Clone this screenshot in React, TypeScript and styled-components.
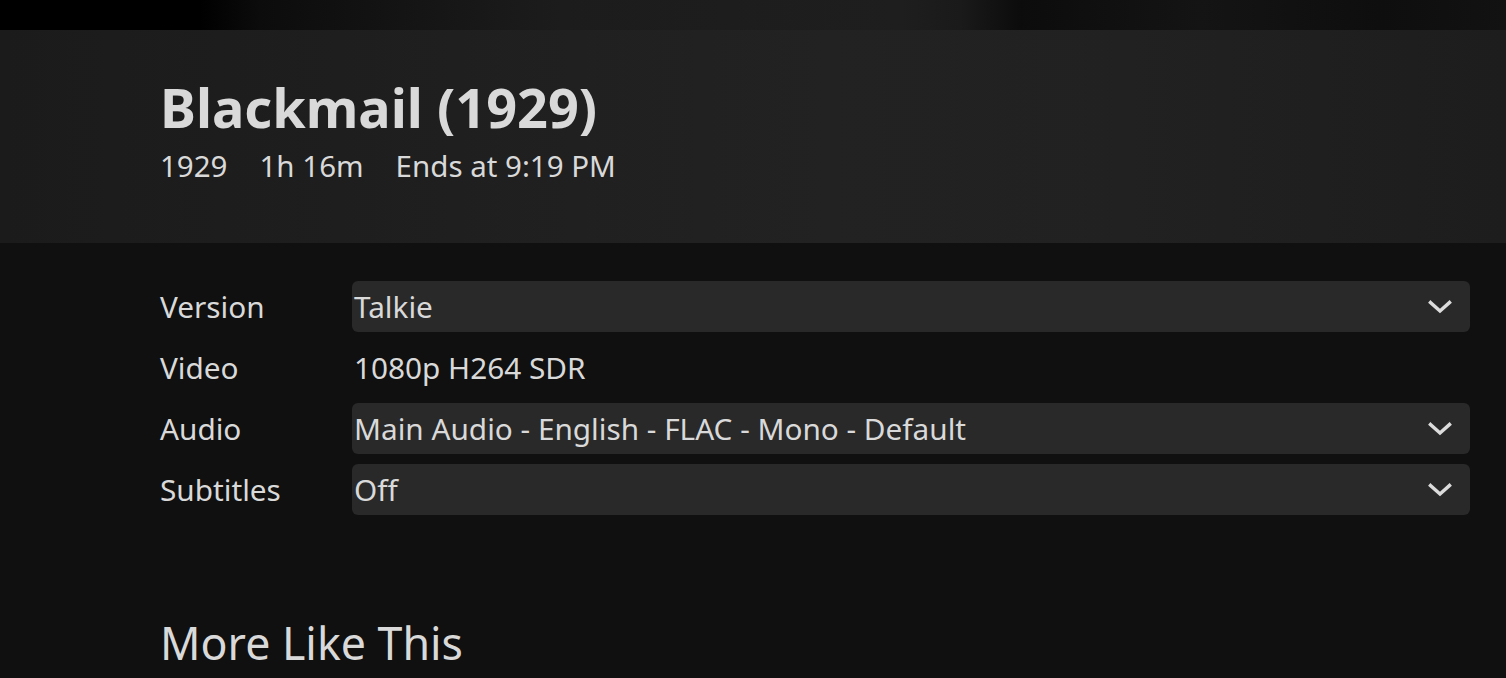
import React from "react";
import styled, { createGlobalStyle } from "styled-components";

const Global = createGlobalStyle`
  html, body {
    margin: 0;
    padding: 0;
    background: #101010;
    font-family: "Noto Sans", "Open Sans", sans-serif;
    color: #d9d9d9;
    overflow: hidden;
  }
`;

const Page = styled.div`
  width: 1506px;
  height: 678px;
  display: flex;
  flex-direction: column;
  background: #101010;
`;

const Backdrop = styled.div`
  height: 30px;
  flex: none;
  background: linear-gradient(
    90deg,
    #000 0px,
    #000 200px,
    #0c0c0c 260px,
    #151515 420px,
    #1c1c1c 560px,
    #1e1e1e 900px,
    #1a1a1a 960px,
    #0c0c0c 1020px,
    #141414 1200px,
    #0e0e0e 1380px,
    #121212 1506px
  );
`;

const Header = styled.header`
  height: 213px;
  flex: none;
  box-sizing: border-box;
  padding: 40px 0 0 160px;
  background: linear-gradient(
    90deg,
    #1b1b1b 0%,
    #1f1f1f 30%,
    #222 55%,
    #212121 75%,
    #1d1d1d 100%
  );
`;

const Title = styled.h1`
  margin: 0;
  font-size: 54px;
  font-weight: 700;
  line-height: 74px;
  color: #d9d9d9;
`;

const Misc = styled.div`
  display: flex;
  gap: 32px;
  font-size: 29.5px;
  line-height: 42px;
  margin-top: 1px;
  color: #d9d9d9;
`;

const Details = styled.section`
  padding: 38px 36px 0 160px;
  display: flex;
  flex-direction: column;
  gap: 10px;
`;

const Row = styled.div`
  display: grid;
  grid-template-columns: 192px 1fr;
  align-items: center;
  height: 51px;
`;

const Label = styled.div`
  font-size: 29.75px;
  color: #d9d9d9;
`;

const Value = styled.div`
  font-size: 29.75px;
  color: #d9d9d9;
  padding-left: 2px;
`;

const Select = styled.div`
  height: 51px;
  background: #292929;
  border-radius: 6px;
  display: flex;
  align-items: center;
  justify-content: space-between;
  padding: 0 18px 0 2px;
  font-size: 29.75px;
  color: #d9d9d9;
`;

const Chevron = () => (
  <svg width="24" height="14" viewBox="0 0 24 14" fill="none">
    <path
      d="M2.5 2.5 L12 11 L21.5 2.5"
      stroke="#dcdcdc"
      strokeWidth="3.4"
      strokeLinecap="square"
      strokeLinejoin="miter"
    />
  </svg>
);

const SectionTitle = styled.h2`
  margin: 98px 0 0 160px;
  font-size: 44.7px;
  font-weight: 400;
  line-height: 60px;
  color: #d9d9d9;
`;

export default function App() {
  return (
    <>
      <Global />
      <Page>
        <Backdrop />
        <Header>
          <Title>Blackmail (1929)</Title>
          <Misc>
            <span>1929</span>
            <span>1h 16m</span>
            <span>Ends at 9:19 PM</span>
          </Misc>
        </Header>
        <Details>
          <Row>
            <Label>Version</Label>
            <Select>
              <span>Talkie</span>
              <Chevron />
            </Select>
          </Row>
          <Row>
            <Label>Video</Label>
            <Value>1080p H264 SDR</Value>
          </Row>
          <Row>
            <Label>Audio</Label>
            <Select>
              <span>Main Audio - English - FLAC - Mono - Default</span>
              <Chevron />
            </Select>
          </Row>
          <Row>
            <Label>Subtitles</Label>
            <Select>
              <span>Off</span>
              <Chevron />
            </Select>
          </Row>
        </Details>
        <SectionTitle>More Like This</SectionTitle>
      </Page>
    </>
  );
}
